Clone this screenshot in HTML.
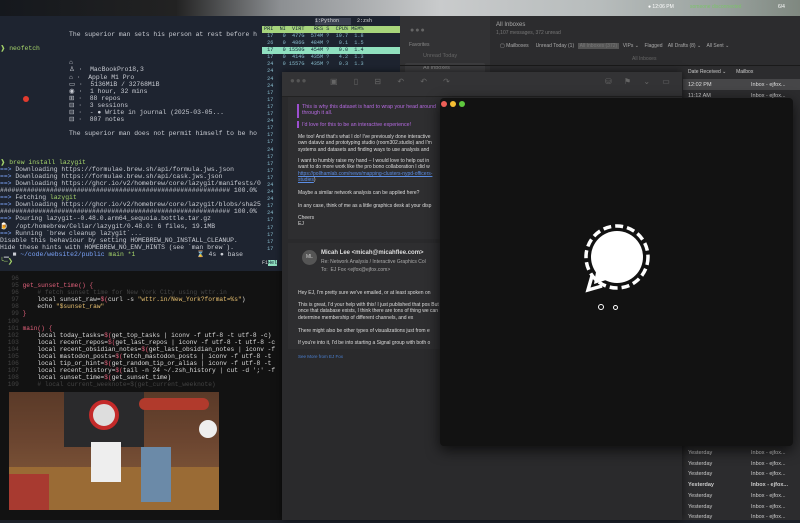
<!DOCTYPE html>
<html><head><meta charset="utf-8"><style>
*{margin:0;padding:0;box-sizing:border-box}
body{width:800px;height:520px;overflow:hidden;background:#1d2129;font-family:"Liberation Sans",sans-serif;position:relative}
.a{position:absolute}
.mono{font-family:"Liberation Mono",monospace;white-space:pre}
.t{font-size:6.4px;line-height:7.1px;color:#c9ccd3}
.m{font-size:5px;color:#ddd;line-height:6.3px}
</style></head><body>
<div class="a" style="left:0;top:0;width:800px;height:16px;background:linear-gradient(90deg,#15181d 0%,#222 22%,#8c8f92 35%,#c9cbcc 55%,#b7bcbc 75%,#9aa39f 90%,#7f8880 100%)"></div>
<div class="a" style="left:648px;top:4px;font-size:5px;color:#fff">● 12:06 PM</div>
<div class="a" style="left:690px;top:4px;font-size:5px;color:#7bc36a">someone disconnected</div>
<div class="a" style="left:778px;top:4px;font-size:5px;color:#fff">6/4</div>

<div class="a" style="left:0;top:16px;width:262px;height:255px;background:#1e2430"></div>
<div class="a mono t" style="left:0;top:31px;width:262px;overflow:hidden">                  The superior man sets his person at rest before h

<span style="color:#a5d46a">❱ neofetch</span>

                  ⌂
                  ♙ ·  MacBookPro18,3
                  ⌂ ·  Apple M1 Pro
                  ▭ ·  5136MiB / 32768MiB
                  ◉ ·  1 hour, 32 mins
                  ⊞ ·  88 repos
                  ⊟ ·  3 sessions
                  ⊟ ·  - ● Write in journal (2025-03-05...
                  ⊟ ·  807 notes

                  The superior man does not permit himself to be ho



<span style="color:#a5d46a">❱ brew install lazygit</span>
<span style="color:#7aa2f7">==></span> Downloading https://formulae.brew.sh/api/formula.jws.json
<span style="color:#7aa2f7">==></span> Downloading https://formulae.brew.sh/api/cask.jws.json
<span style="color:#7aa2f7">==></span> Downloading https://ghcr.io/v2/homebrew/core/lazygit/manifests/0
############################################################ 100.0%
<span style="color:#7aa2f7">==></span> Fetching <span style="color:#a5d46a">lazygit</span>
<span style="color:#7aa2f7">==></span> Downloading https://ghcr.io/v2/homebrew/core/lazygit/blobs/sha25
############################################################ 100.0%
<span style="color:#7aa2f7">==></span> Pouring lazygit--0.48.0.arm64_sequoia.bottle.tar.gz
🍺  /opt/homebrew/Cellar/lazygit/0.48.0: 6 files, 19.1MB
<span style="color:#7aa2f7">==></span> Running `brew cleanup lazygit`...
Disable this behaviour by setting HOMEBREW_NO_INSTALL_CLEANUP.
Hide these hints with HOMEBREW_NO_ENV_HINTS (see `man brew`).
 ▁ ■ <span style="color:#7aa2f7">~/code/website2/public</span> <span style="color:#a5d46a">main *1</span>                ⌛ 4s ● base
<span style="color:#a5d46a">╰─❯</span></div>
<div class="a" style="left:23px;top:96px;width:6px;height:6px;border-radius:50%;background:#e23b2e"></div>

<div class="a" style="left:262px;top:16px;width:138px;height:255px;background:#1e2430"></div>
<div class="a" style="left:315px;top:18px;width:36px;height:7px;background:#3a4050;font-size:5px;color:#ddd;font-family:'Liberation Mono'">1:Python</div>
<div class="a mono" style="left:357px;top:18px;font-size:5px;color:#ddd">2:zsh</div>
<div class="a" style="left:262px;top:26px;width:138px;height:7px;background:#a6d47c"></div>
<div class="a mono" style="left:264px;top:26px;font-size:5.2px;color:#123;line-height:7px">PRI  NI  VIRT   RES S  CPU% MEM%</div>
<div class="a" style="left:262px;top:47px;width:138px;height:7px;background:#8fe0c0"></div>
<div class="a mono" style="left:264px;top:33px;font-size:5.2px;color:#8bc;line-height:7.1px"> 17   0  477G  574M ?  19.7  1.8
 26   0  486G  484M ?   0.1  1.5
<span style="color:#123"> 17   0 1550G  454M ?   0.0  1.4</span>
 17   0  414G  435M ?   4.2  1.3
 24   0 1557G  435M ?   0.3  1.3
 24
 24
 24
 17
 17
 17
 17
 24
 17
 17
 17
 24
 17
 17
 17
 17
 24
 24
 24
 17
 24
 17
 17
 17
 17
 17</div>
<div class="a mono" style="left:262px;top:260px;font-size:5px;color:#ddd">F1<span style="background:#8fe0c0;color:#123">Hel</span></div>

<div class="a" style="left:0;top:271px;width:282px;height:249px;background:#121212"></div>
<div class="a mono" style="left:4px;top:275px;font-size:6.2px;line-height:7.1px;color:#ddd"><span style="color:#444">  96
  95 </span><span style="color:#e0607a">get_sunset_time() {</span>
<span style="color:#444">  96     # fetch sunset time for New York City using wttr.in</span>
<span style="color:#444">  97 </span>    local sunset_raw=<span style="color:#e0607a">$(</span>curl -s <span style="color:#e8c070">"wttr.in/New_York?format=%s"</span>)
<span style="color:#444">  98 </span>    echo <span style="color:#e8c070">"$sunset_raw"</span>
<span style="color:#444">  99 </span><span style="color:#e0607a">}</span>
<span style="color:#444"> 100</span>
<span style="color:#444"> 101 </span><span style="color:#e0607a">main() {</span>
<span style="color:#444"> 102 </span>    local today_tasks=<span style="color:#e0607a">$(</span>get_top_tasks | iconv -f utf-8 -t utf-8 -c)
<span style="color:#444"> 103 </span>    local recent_repos=<span style="color:#e0607a">$(</span>get_last_repos | iconv -f utf-8 -t utf-8 -c
<span style="color:#444"> 104 </span>    local recent_obsidian_notes=<span style="color:#e0607a">$(</span>get_last_obsidian_notes | iconv -f
<span style="color:#444"> 105 </span>    local mastodon_posts=<span style="color:#e0607a">$(</span>fetch_mastodon_posts | iconv -f utf-8 -t
<span style="color:#444"> 106 </span>    local tip_or_hint=<span style="color:#e0607a">$(</span>get_random_tip_or_alias | iconv -f utf-8 -t
<span style="color:#444"> 107 </span>    local recent_history=<span style="color:#e0607a">$(</span>tail -n 24 ~/.zsh_history | cut -d ';' -f
<span style="color:#444"> 108 </span>    local sunset_time=<span style="color:#e0607a">$(</span>get_sunset_time)
<span style="color:#444"> 109     # local current_weeknote=$(get_current_weeknote)</span></div>
<div class="a" style="left:9px;top:392px;width:210px;height:118px;background:linear-gradient(180deg,#5a3a28 0%,#6b4530 40%,#7a5236 70%,#5b3d28 100%);overflow:hidden">
 <div class="a" style="left:55px;top:0;width:80px;height:55px;background:#2a2a2c"></div>
 <div class="a" style="left:80px;top:8px;width:30px;height:30px;border-radius:50%;border:4px solid #c42a2a;background:#ddd"></div>
 <div class="a" style="left:0;top:75px;width:210px;height:43px;background:#9a6b35"></div>
 <div class="a" style="left:82px;top:50px;width:30px;height:40px;background:#eee"></div>
 <div class="a" style="left:132px;top:55px;width:30px;height:55px;background:#6b8aa8"></div>
 <div class="a" style="left:0;top:82px;width:40px;height:36px;background:#a83a30"></div>
 <div class="a" style="left:130px;top:6px;width:70px;height:12px;background:#b13a2c;border-radius:6px"></div>
 <div class="a" style="left:190px;top:28px;width:18px;height:18px;border-radius:50%;background:#eee"></div>
</div>

<div class="a" style="left:400px;top:16px;width:400px;height:504px;background:#2c2c2e"></div>
<div class="a" style="left:400px;top:16px;width:90px;height:60px;background:#323234"></div>
<div class="a" style="left:410px;top:27px;width:30px;height:6px;font-size:7px;color:#666;letter-spacing:1px">●●●</div>
<div class="a" style="left:409px;top:42px;font-size:5px;color:#888">Favorites</div>
<div class="a" style="left:423px;top:53px;font-size:5.5px;color:#666">Unread Today</div>
<div class="a" style="left:405px;top:63px;width:80px;height:10px;background:#3c3c3e;border-radius:2px"></div>
<div class="a" style="left:423px;top:65px;font-size:5.5px;color:#888">All Inboxes</div>
<div class="a" style="left:496px;top:22px;font-size:6px;color:#aaa">All Inboxes</div>
<div class="a" style="left:496px;top:30px;font-size:5px;color:#777">1,107 messages, 372 unread</div>
<div class="a" style="left:500px;top:43px;font-size:5px;color:#aaa;white-space:nowrap">▢ Mailboxes &nbsp;&nbsp;&nbsp; Unread Today (1) &nbsp;&nbsp;<span style="background:#555;color:#777">&nbsp;All Inboxes (372)&nbsp;</span>&nbsp;&nbsp; VIPs ⌄ &nbsp;&nbsp; Flagged &nbsp;&nbsp; All Drafts (8) ⌄ &nbsp;&nbsp; All Sent ⌄</div>
<div class="a" style="left:632px;top:56px;font-size:5px;color:#666">All Inboxes</div>
<div class="a" style="left:400px;top:65px;width:400px;height:1px;background:#1a1a1a"></div>
<div class="a" style="left:683px;top:66px;width:117px;height:12px;font-size:5px;color:#ccc;line-height:12px;padding-left:5px;white-space:nowrap">Date Received ⌄ &nbsp;&nbsp;&nbsp;&nbsp;&nbsp; Mailbox</div>
<div class="a" style="left:683px;top:79px;width:117px;height:11px;background:#464648"></div>
<div class="a" style="left:688px;top:82px;font-size:5.5px;color:#ddd">12:02 PM</div>
<div class="a" style="left:751px;top:82px;font-size:5.5px;color:#ddd">Inbox - ejfox...</div>
<div class="a" style="left:688px;top:93px;font-size:5.5px;color:#ccc">11:12 AM</div>
<div class="a" style="left:751px;top:93px;font-size:5.5px;color:#ccc">Inbox - ejfox...</div>
<div class="a" style="left:688px;top:448px;font-size:5.5px;line-height:10.7px;color:#ccc;white-space:pre">Yesterday
Yesterday
Yesterday
<b>Yesterday</b>
Yesterday
Yesterday
Yesterday</div>
<div class="a" style="left:751px;top:448px;font-size:5.5px;line-height:10.7px;color:#ccc;white-space:pre">Inbox - ejfox...
Inbox - ejfox...
Inbox - ejfox...
<b>Inbox - ejfox...</b>
Inbox - ejfox...
Inbox - ejfox...
Inbox - ejfox...</div>

<div class="a" style="left:282px;top:72px;width:400px;height:448px;background:#2a2a2c;box-shadow:0 0 8px rgba(0,0,0,.6)"></div>
<div class="a" style="left:282px;top:72px;width:400px;height:25px;background:#333335;border-bottom:1px solid #222"></div>
<div class="a" style="left:290px;top:76px;font-size:8px;color:#555;letter-spacing:1px">●●●</div>
<div class="a" style="left:330px;top:77px;font-size:8px;color:#666;word-spacing:14px">▣ ▯ ⊟ ↶ ↶ ↷</div>
<div class="a" style="left:605px;top:77px;font-size:8px;color:#666;word-spacing:10px">⛁ ⚑ ⌄ ▭</div>
<div class="a" style="left:288px;top:97px;width:394px;height:142px;background:#2e2e30"></div>
<div class="a" style="left:297px;top:104px;width:1.5px;height:14px;background:#9d4fd0"></div>
<div class="a" style="left:302px;top:104px;font-size:5.3px;color:#b56ae0;line-height:6.3px">This is why this dataset is hard to wrap your head around<br>through it all.</div>
<div class="a" style="left:297px;top:121px;width:1.5px;height:7px;background:#9d4fd0"></div>
<div class="a" style="left:302px;top:122px;font-size:5.3px;color:#b56ae0">I'd love for this to be an interactive experience!</div>
<div class="a m" style="left:298px;top:134px;width:142px">Me too! And that's what I do! I've previously done interactive own dataviz and prototyping studio (room302.studio) and I'm systems and datasets and finding ways to use analysis and</div>
<div class="a m" style="left:298px;top:158px;width:142px">I want to humbly raise my hand – I would love to help out in want to do more work like the pro bono collaboration I did w <span style="color:#5b8ee6;text-decoration:underline">https://pollhamlab.com/news/mapping-clusters-nypd-officers-studies</span>)</div>
<div class="a m" style="left:298px;top:190px">Maybe a similar network analysis can be applied here?</div>
<div class="a m" style="left:298px;top:203px">In any case, think of me as a little graphics desk at your disp</div>
<div class="a m" style="left:298px;top:215px">Cheers<br>EJ</div>
<div class="a" style="left:288px;top:243px;width:394px;height:106px;background:#2e2e30"></div>
<div class="a" style="left:302px;top:250px;width:15px;height:15px;border-radius:50%;background:#555;font-size:5px;color:#ccc;text-align:center;line-height:15px">ML</div>
<div class="a" style="left:321px;top:250px;font-size:6px;color:#ddd;font-weight:bold">Micah Lee &lt;micah@micahflee.com&gt;</div>
<div class="a" style="left:321px;top:259px;font-size:5px;color:#aaa">Re: Network Analysis / Interactive Graphics Col</div>
<div class="a" style="left:321px;top:267px;font-size:5px;color:#aaa">To: &nbsp;EJ Fox &lt;ejfox@ejfox.com&gt;</div>
<div class="a m" style="left:298px;top:290px">Hey EJ, I'm pretty sure we've emailed, or at least spoken on</div>
<div class="a m" style="left:298px;top:302px;width:142px">This is great, I'd your help with this! I just published that pos But once that database exists, I think there are tons of thing we can determine membership of different channels, and ex</div>
<div class="a m" style="left:298px;top:328px">There might also be other types of visualizations just from e</div>
<div class="a m" style="left:298px;top:340px">If you're into it, I'd be into starting a Signal group with both o</div>
<div class="a" style="left:298px;top:354px;font-size:4.5px;color:#4a7fd0">See More from EJ Fox</div>

<div class="a" style="left:440px;top:98px;width:353px;height:348px;background:#121212;border-radius:4px;box-shadow:0 4px 14px rgba(0,0,0,.7)"></div>
<div class="a" style="left:441px;top:101px;width:6px;height:6px;border-radius:50%;background:#ee5f57"></div>
<div class="a" style="left:450px;top:101px;width:6px;height:6px;border-radius:50%;background:#f4bd33"></div>
<div class="a" style="left:459px;top:101px;width:6px;height:6px;border-radius:50%;background:#5fc83e"></div>
<svg class="a" style="left:582px;top:224px" width="70" height="70" viewBox="0 0 70 70">
 <circle cx="35" cy="33" r="26" fill="#fff"/>
 <circle cx="35" cy="33" r="31" fill="none" stroke="#fff" stroke-width="3.5" stroke-dasharray="8 4"/>
 <path d="M10 52 L6 66 L20 62" fill="none" stroke="#fff" stroke-width="3.5"/>
 <path d="M14 48 L12 60 L24 56 Z" fill="#fff"/>
</svg>
<div class="a" style="left:598px;top:304px;width:6px;height:6px;border-radius:50%;border:1.3px solid #fff"></div>
<div class="a" style="left:613px;top:305px;width:5px;height:5px;border-radius:50%;border:1.2px solid #fff"></div>
</body></html>
